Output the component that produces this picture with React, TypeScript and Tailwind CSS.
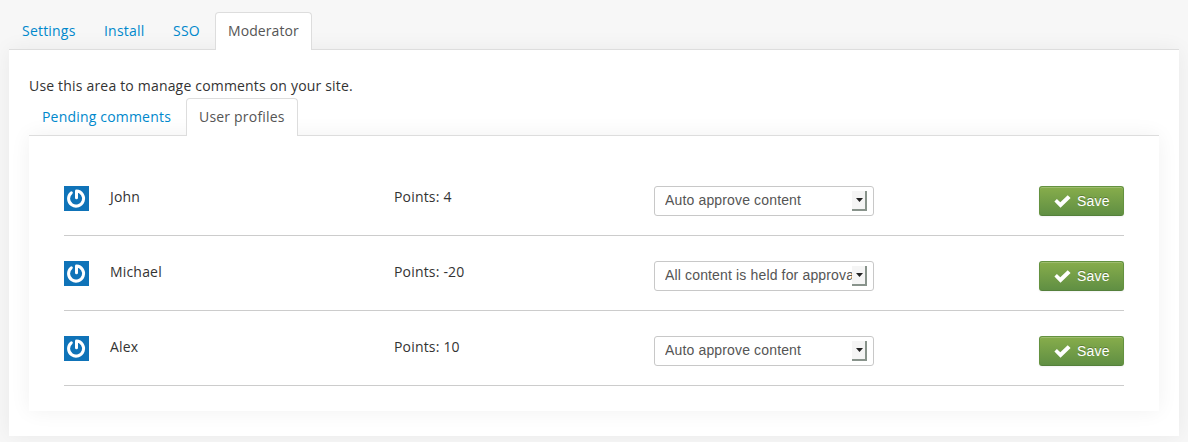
import React from 'react';

type TabProps = { label: string; active?: boolean; width: string; tracking: string };

function Tab({ label, active, width, tracking }: TabProps) {
  return (
    <button
      type="button"
      className={`relative z-10 mr-0.5 -mb-px h-[38px] shrink-0 rounded-t border border-b-0 px-3 pb-px text-left leading-5 whitespace-nowrap ${width} ${tracking} ${
        active ? 'border-[#dddddd] bg-white text-[#555555]' : 'border-transparent text-[#0088cc]'
      }`}
    >
      {label}
    </button>
  );
}

function Avatar() {
  return (
    <svg className="block size-[25px] bg-[#0f73b8]" viewBox="0 0 25 25" fill="none">
      <path
        d="M7.3 6.8 A7.5 7.5 0 1 0 12.5 5.1 V11.8"
        stroke="#fff"
        strokeWidth="3"
        strokeLinecap="round"
        strokeLinejoin="round"
      />
    </svg>
  );
}

function SelectBox({ value }: { value: string }) {
  return (
    <div className="flex h-[30px] w-[220px] items-center rounded-[3px] border border-[#c8c8c8] bg-white pr-1.5 pl-2.5 font-['Liberation_Sans',sans-serif] tracking-[0.15px] text-[#555555]">
      <span className="min-w-0 flex-1 overflow-hidden pb-0.5 leading-5 whitespace-nowrap">{value}</span>
      <span className="flex h-5 w-[15px] shrink-0 items-center justify-center border-r-2 border-b-2 border-[#88938b] bg-[#f5f5f5] pl-px">
        <svg className="block h-1 w-[7px]" viewBox="0 0 7 4">
          <path d="M0 0H7L3.5 4Z" fill="#222" />
        </svg>
      </span>
    </div>
  );
}

function SaveButton() {
  return (
    <button
      type="button"
      className="flex h-[30px] w-[85px] items-center rounded-[3px] border border-[#64923f] border-b-[#54803b] bg-linear-to-b from-[#87ad4b] to-[#608f43] pl-[14px] font-['Liberation_Sans',sans-serif] text-white shadow-[inset_0_1px_0_rgba(255,255,255,0.2),0_1px_2px_rgba(0,0,0,0.05)]"
    >
      <svg className="block h-[13px] w-[17px]" viewBox="0 0 17 13">
        <path d="M0.4 6.6L2.9 4.1L6.3 7.2L13.7 0.3L16.6 3.1L6.5 12.7Z" fill="#fff" />
      </svg>
      <span className="ml-1.5 leading-5 [text-shadow:0_-1px_0_rgba(0,0,0,0.25)]">Save</span>
    </button>
  );
}

const profiles = [
  { name: 'John', points: 4, mode: 'Auto approve content' },
  { name: 'Michael', points: -20, mode: 'All content is held for approval' },
  { name: 'Alex', points: 10, mode: 'Auto approve content' },
];

export default function App() {
  return (
    <div className="h-[442px] w-[1188px] overflow-hidden bg-[#f7f7f7] px-[9px] pt-3 font-['Open_Sans',sans-serif] text-[14px] text-[#333333]">
      <nav className="flex">
        <Tab label="Settings" width="w-[80px]" tracking="tracking-[0.2px]" />
        <Tab label="Install" width="w-[67px]" tracking="tracking-[0.2px]" />
        <Tab label="SSO" width="w-[53px]" tracking="tracking-[0.2px]" />
        <Tab label="Moderator" width="w-[97px]" tracking="tracking-[0.08px]" active />
      </nav>
      <main className="h-[387px] border-t border-[#dddddd] bg-white px-5 pt-[26px] shadow-[0_0_20px_rgba(0,0,0,0.06)]">
        <p className="h-[22px] leading-5 tracking-[0.185px]">Use this area to manage comments on your site.</p>
        <nav className="flex">
          <Tab label="Pending comments" width="w-[155px]" tracking="tracking-[0.19px]" />
          <Tab label="User profiles" width="w-[112px]" tracking="tracking-[0.2px]" active />
        </nav>
        <section className="h-[276px] border-t border-[#dddddd] bg-white px-[35px] pt-[25px] shadow-[0_0_20px_rgba(0,0,0,0.06)]">
          {profiles.map((p) => (
            <div key={p.name} className="flex h-[75px] items-start border-b border-[#cccccc] pt-[25px] tracking-[0.18px]">
              <Avatar />
              <span className="ml-[21px] w-[284px] leading-[22px]">{p.name}</span>
              <span className="w-[260px] leading-[22px]">Points: {p.points}</span>
              <SelectBox value={p.mode} />
              <div className="ml-auto">
                <SaveButton />
              </div>
            </div>
          ))}
        </section>
      </main>
    </div>
  );
}
